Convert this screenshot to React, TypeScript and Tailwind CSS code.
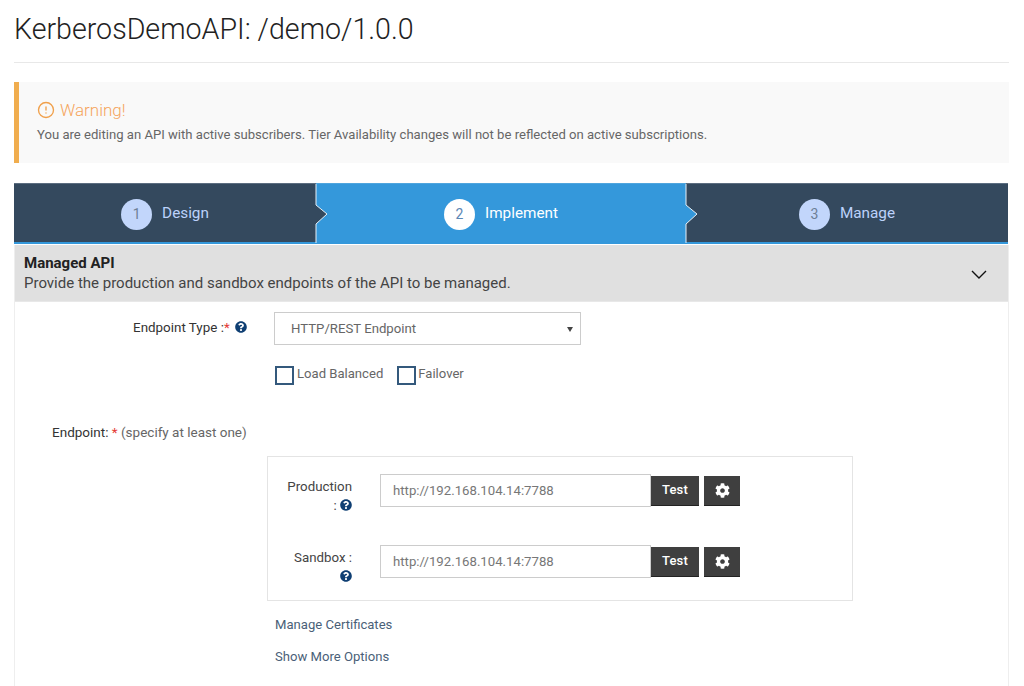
import { FaCog, FaQuestionCircle } from "react-icons/fa";
import { CircleAlert } from "lucide-react";

function Step({ n, label, active, className, arrow }: { n: number; label: string; active?: boolean; className: string; arrow?: boolean }) {
  return (
    <div className={`relative flex items-center justify-center gap-[10px] h-full pt-[2px] border-t border-b-2 border-b-[#3498db] ${active ? "bg-[#3498db] border-t-[#4fa5de] text-white" : "bg-[#34495e] border-t-[#5c6d80] text-[#bcd2fb]"} ${className}`}>
      <span className={`flex items-center justify-center w-[31px] h-[31px] rounded-full text-[14px] ${active ? "bg-white text-[#5b86b5]" : "bg-[#c2d6fb] text-[#6d7f96]"}`}>{n}</span>
      <span className="text-[15.3px] leading-none">{label}</span>
      {arrow && (
        <svg className="absolute right-[-13px] top-0 z-10" width="14" height="59" viewBox="0 0 14 59">
          <path d="M1 0 V21 L12 30 L1 40 V59" fill={active ? "#3498db" : "#34495e"} stroke="#e6f0f8" strokeWidth="1" />
        </svg>
      )}
    </div>
  );
}

function Help({ className = "" }: { className?: string }) {
  return <FaQuestionCircle className={`inline-block text-[#0f3f73] text-[12px] ${className}`} />;
}

function EndpointRow({ label }: { label: React.ReactNode }) {
  return (
    <div className="flex items-start">
      <div className="w-[84px] text-right text-[13.3px] leading-[19px] text-[#444] pt-[3px]">{label}</div>
      <div className="ml-[28px] flex items-center">
        <div className="w-[271px] h-[33px] border border-[#ccc] bg-white flex items-center pl-[12px] text-[13.2px] text-[#777]">http://192.168.104.14:7788</div>
        <button className="w-[48px] h-[30px] bg-[#3f3f3f] border-b border-b-[#222] text-white text-[13px] font-medium tracking-[0.2px]">Test</button>
        <button className="ml-[5px] w-[36px] h-[30px] bg-[#3f3f3f] border-b border-b-[#222] text-white flex items-center justify-center"><FaCog className="text-[15px]" /></button>
      </div>
    </div>
  );
}

export default function App() {
  return (
    <div className="w-[1024px] h-[686px] overflow-hidden bg-white pl-[14px] pr-[15px] font-['Roboto',sans-serif] text-[#444]">
      <h1 className="h-[63px] pt-[12px] border-b border-b-[#e8e8e8] text-[28.6px] leading-[34px] font-light text-[#222]">KerberosDemoAPI: /demo/1.0.0</h1>
      <div className="mt-[19px] h-[81px] bg-[#f9f9f9] border-l-[5px] border-l-[#f0ad4e] pl-[18px] pt-[17px]">
        <div className="flex items-center gap-[5px] text-[#f5a55d] text-[17px] leading-[22px] font-light">
          <CircleAlert className="w-[18px] h-[18px] text-[#f0a04b]" strokeWidth={1.8} />
          <span>Warning!</span>
        </div>
        <p className="mt-[5px] text-[13.1px] leading-[18px] text-[#666]">You are editing an API with active subscribers. Tier Availability changes will not be reflected on active subscriptions.</p>
      </div>
      <div className="mt-[20px] h-[61px] flex pr-[1px]">
        <Step n={1} label="Design" className="w-[302px]" arrow />
        <Step n={2} label="Implement" active className="w-[370px]" arrow />
        <Step n={3} label="Manage" className="flex-1" />
      </div>
      <div className="border-x border-x-[#eee] h-[442px]">
        <div className="mt-[1px] h-[57px] bg-[#e0e0e0] border-b border-b-[#e8e8e8] pl-[9px] pr-[21px] flex items-center justify-between text-[#222]">
          <div>
            <div className="text-[15px] leading-[19px] font-bold">Managed API</div>
            <div className="text-[15px] leading-[20px] text-[#444]">Provide the production and sandbox endpoints of the API to be managed.</div>
          </div>
          <svg className="mt-[3px]" width="16" height="9" viewBox="0 0 16 9" fill="none"><path d="M1 1 L8 8 L15 1" stroke="#111" strokeWidth="1.4" /></svg>
        </div>
        <div className="flex items-center h-[33px] mt-[10px]">
          <div className="w-[232px] text-right text-[13.4px] leading-[28px] -mt-[2px] text-[#333] whitespace-nowrap">Endpoint Type :<span className="text-[#e53935]">*</span> <Help className="ml-[2px] -mt-[2px] align-middle" /></div>
          <div className="ml-[27px] w-[307px] h-[33px] border border-[#ccc] pl-[16px] pr-[7px] flex items-center justify-between text-[13.2px] text-[#666]">
            <span>HTTP/REST Endpoint</span>
            <svg width="6" height="6" viewBox="0 0 6 6"><path d="M0 1 H6 L3 6 Z" fill="#444" /></svg>
          </div>
        </div>
        <div className="flex items-center ml-[260px] mt-[21px] text-[13.1px] text-[#666]">
          <span className="w-[19px] h-[19px] border-2 border-[#34597c] mr-[3px] bg-white"></span>
          <span className="-mt-[3px]">Load Balanced</span>
          <span className="w-[19px] h-[19px] border-2 border-[#34597c] ml-[14px] mr-[2px] bg-white"></span>
          <span className="-mt-[3px]">Failover</span>
        </div>
        <div className="ml-[37px] mt-[38px] text-[13.5px] leading-[18px] text-[#333]">Endpoint: <span className="text-[#e53935]">*</span> <span className="text-[#666]">(specify at least one)</span></div>
        <div className="ml-[252px] mt-[15px] w-[586px] h-[145px] border border-[#e4e4e4] pt-[17px] flex flex-col gap-[30px]">
          <EndpointRow label={<>Production<br />: <Help className="-mt-[2px] align-middle" /></>} />
          <EndpointRow label={<>Sandbox :<br /><Help className="-mt-[2px] align-middle" /></>} />
        </div>
        <div className="ml-[260px] mt-[15px] text-[13.1px] leading-[18px] text-[#4a5f78]">Manage Certificates</div>
        <div className="ml-[260px] mt-[14px] text-[13.1px] leading-[18px] text-[#4a5f78]">Show More Options</div>
      </div>
    </div>
  );
}
